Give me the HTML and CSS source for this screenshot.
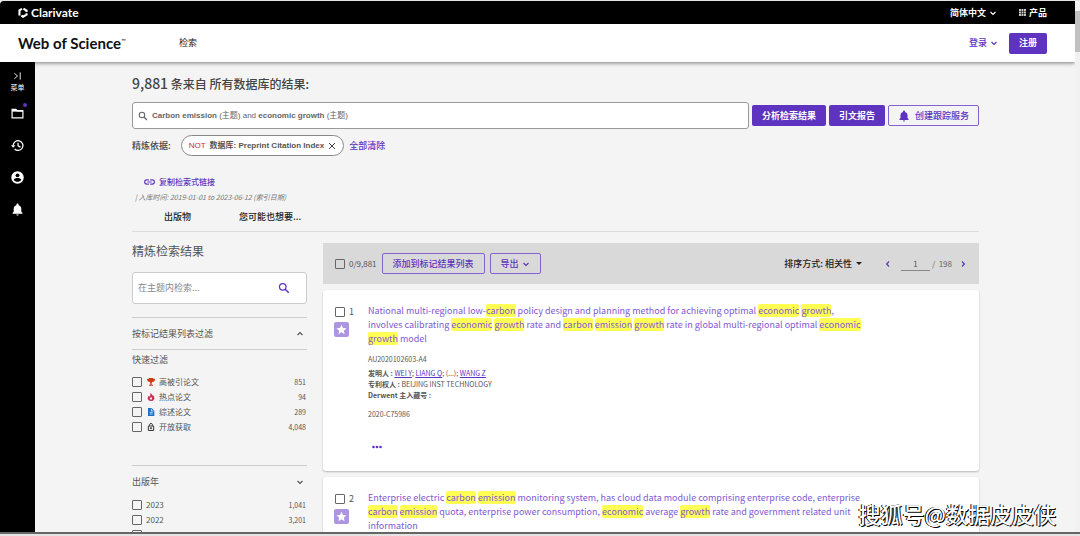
FILE: index.html
```html
<!DOCTYPE html>
<html lang="zh-CN">
<head>
<meta charset="utf-8">
<title>Web of Science</title>
<link rel="stylesheet" href="styles.css">
</head>
<body>
<svg class="defs" aria-hidden="true">
  <symbol id="down" viewBox="0 0 8 8"><path d="M1.500 3l2.500 2.400L6.500 3" fill="none" stroke="currentColor" stroke-width="1.200"/></symbol>
  <symbol id="star" viewBox="0 0 24 24"><path fill="#fff" d="M12 1.500l3.200 7.100 7.700.7-5.800 5.200 1.700 7.600L12 18.100l-6.800 4 1.700-7.600L1.100 9.300l7.700-.7z"/></symbol>
  <symbol id="bell" viewBox="0 0 24 24"><path fill="currentColor" d="M12 23c1.200 0 2.200-.9 2.200-2H9.800c0 1.100 1 2 2.200 2zM19 16v-5.500c0-3.200-1.800-5.800-5-6.500V3c0-1-.8-2-2-2s-2 1-2 2v1c-3.200.7-5 3.300-5 6.500V16l-2 2v2h18v-2z"/></symbol>
  <symbol id="lens" viewBox="0 0 24 24"><circle cx="9.500" cy="9.500" r="6.500" fill="none" stroke="currentColor" stroke-width="2.500"/><path d="M14.500 14.500l7 7" stroke="currentColor" stroke-width="3"/></symbol>
</svg>
<div class="window">
  <div class="page">
    <header>
      <div class="topbar">
        <a class="brand" href="#"><svg class="brand-mark" viewBox="0 0 24 26" fill="none" stroke="#fff" stroke-width="5"><path d="M3.500 20V8l6-4"/><path d="M13 3.500l7.500 5V12"/><path d="M20.500 15v3L12 23l-4-2.500"/></svg>Clarivate</a>
        <nav class="top-links">
          <button type="button">简体中文 <svg class="chev"><use href="#down"/></svg></button>
          <button type="button"><svg class="grid" viewBox="0 0 9 9" fill="#ccc"><path d="M0 0h2.500v2.500H0zM3.200 0h2.500v2.500H3.200zM6.400 0h2.500v2.500H6.400zM0 3.200h2.500v2.500H0zM3.200 3.200h2.500v2.500H3.200zM6.400 3.200h2.500v2.500H6.400zM0 6.400h2.500v2.500H0zM3.200 6.400h2.500v2.500H3.200zM6.400 6.400h2.500v2.500H6.400z"/></svg> 产品</button>
        </nav>
      </div>
      <div class="header">
        <a class="wos" href="#">Web of Science<sup>™</sup></a>
        <a class="nav-search" href="#">检索</a>
        <button type="button" class="signin">登录 <svg class="chev"><use href="#down"/></svg></button>
        <button type="button" class="solid">注册</button>
      </div>
    </header>
    <div class="body">
      <nav class="rail">
        <button type="button" class="menu"><svg viewBox="0 0 10 8" fill="none" stroke="#fff"><path d="M1.500 1L5 4 1.500 7M8 0v8"/></svg>菜单</button>
        <button type="button" class="folder" aria-label="标记结果列表"><svg viewBox="0 0 24 24" fill="none" stroke="#fff" stroke-width="2.200"><path d="M2 20V4.500h7l2.500 2.500H22v13z"/><path d="M2 7h20" stroke-width="3"/></svg><i class="dot"></i></button>
        <button type="button" aria-label="历史"><svg viewBox="0 0 24 24" fill="none" stroke="#fff" stroke-width="2.300"><path d="M4 12a9 9 0 1 1 2.700 6.500M13 7v5.500l4.500 2.500"/><path d="M0 11.500h8L4 16z" fill="#fff" stroke="none"/></svg></button>
        <button type="button" aria-label="个人信息"><svg viewBox="0 0 24 24"><circle cx="12" cy="12" r="11.500" fill="#fff"/><circle cx="12" cy="8" r="3.500"/><path d="M5 16c1.500-4 12.500-4 14 0-3 5-11 5-14 0z"/></svg></button>
        <button type="button" aria-label="跟踪服务"><svg><use href="#bell"/></svg></button>
      </nav>
      <main>
        <h1><span class="total">9,881</span> 条来自 所有数据库的结果:</h1>
        <div class="query-row">
          <button type="button" class="query"><svg class="query-lens"><use href="#lens"/></svg><span><b>Carbon emission</b> (主题) and <b>economic growth</b> (主题)</span></button>
          <button type="button" class="solid">分析检索结果</button>
          <button type="button" class="solid">引文报告</button>
          <button type="button" class="outline alert"><svg><use href="#bell"/></svg>创建跟踪服务</button>
        </div>
        <div class="refined">
          <span>精炼依据:</span>
          <button type="button" class="pill"><span class="not">NOT</span><b>数据库: Preprint Citation Index</b><svg viewBox="0 0 8 8" stroke="#444"><path d="M1 1l6 6M7 1L1 7"/></svg></button>
          <a href="#">全部清除</a>
        </div>
        <a class="copy" href="#"><svg viewBox="0 0 24 12" fill="none" stroke="currentColor" stroke-width="2.500"><path d="M10.500 1.500H6a4.500 4.500 0 0 0 0 9h4.500M13.500 1.500H18a4.500 4.500 0 0 1 0 9h-4.500M7.500 6h9"/></svg>复制检索式链接</a>
        <p class="indexed">| 入库时间: 2019-01-01 to 2023-06-12 (索引日期)</p>
        <nav class="tabs"><a href="#">出版物</a><a href="#">您可能也想要...</a></nav>
        <div class="columns">
          <aside>
            <h2>精炼检索结果</h2>
            <div class="filter-search"><input type="text" aria-label="在主题内检索" placeholder="在主题内检索..."><button type="button" aria-label="检索"><svg><use href="#lens"/></svg></button></div>
            <button type="button" class="section">按标记结果列表过滤<svg class="chev up"><use href="#down"/></svg></button>
            <div class="group quick">
              <h3>快速过滤</h3>
              <label><input type="checkbox"><svg viewBox="0 0 12 12"><path fill="#d2390f" d="M3 0h6v1h3c0 3-1 4.500-3.500 4.800L7 7.500V10h2v1.500H3V10h2V7.500L3.500 5.800C1 5.500 0 4 0 1h3z"/></svg>高被引论文<span>851</span></label>
              <label><input type="checkbox"><svg viewBox="0 0 12 12"><path fill="#cf2f55" d="M5 0c3 1.500 2.500 3 3 4l1-1c4 5 1.500 9-3 9S-.5 8 2.500 4l1 1.500C5 4 5.500 2 5 0z"/><path fill="#f4f4f4" d="M6.500 6c2 2 1 4-.5 4S4 8.500 4.500 7.500z"/></svg>热点论文<span>94</span></label>
              <label><input type="checkbox"><svg viewBox="0 0 12 12"><path fill="#1c6fcb" d="M1.500 0H7l4 4v8H1.500z"/><path stroke="#fff" d="M4 6.500h4.500M4 9h4.500M6.500 1v3.500H10" fill="none"/></svg>综述论文<span>289</span></label>
              <label><input type="checkbox"><svg viewBox="0 0 12 12" fill="none" stroke="#333" stroke-width="1.500"><path d="M2 4.500h8v6.700H2zM3.700 4V2.500C3.700.3 8.300.3 8.300 2.500V4"/><circle cx="6" cy="7.800" r="1"/></svg>开放获取<span>4,048</span></label>
            </div>
            <button type="button" class="section year">出版年<svg class="chev"><use href="#down"/></svg></button>
            <div class="group">
              <label><input type="checkbox">2023<span>1,041</span></label>
              <label><input type="checkbox">2022<span>3,201</span></label>
              <label><input type="checkbox">2021<span>2,205</span></label>
            </div>
          </aside>
          <section class="results">
            <div class="toolbar">
              <label class="all"><input type="checkbox">0/9,881</label>
              <button type="button" class="outline">添加到标记结果列表</button>
              <button type="button" class="outline">导出 <svg class="chev"><use href="#down"/></svg></button>
              <div class="sort"><label for="sort">排序方式:</label><select id="sort"><option>相关性</option></select></div>
              <div class="pager">
                <button type="button" aria-label="上一页"><svg class="chev prev"><use href="#down"/></svg></button>
                <input type="text" value="1" aria-label="页码"><span>/&nbsp; 198</span>
                <button type="button" aria-label="下一页"><svg class="chev next"><use href="#down"/></svg></button>
              </div>
            </div>
            <article>
              <div class="pick"><label><input type="checkbox">1</label><span class="star"><svg><use href="#star"/></svg></span></div>
              <div class="record">
                <a class="title" href="#">National multi-regional low-<mark>carbon</mark> policy design and planning method for achieving optimal <mark>economic</mark> <mark>growth</mark>, involves calibrating <mark>economic</mark> <mark>growth</mark> rate and <mark>carbon</mark> <mark>emission</mark> <mark>growth</mark> rate in global multi-regional optimal <mark>economic</mark> <mark>growth</mark> model</a>
                <p class="number">AU2020102603-A4</p>
                <p><b>发明人 :</b> <a href="#">WEI Y</a>; <a href="#">LIANG Q</a>; (...); <a href="#">WANG Z</a></p>
                <p><b>专利权人 :</b> BEIJING INST TECHNOLOGY</p>
                <p><b>Derwent 主入藏号 :</b></p>
                <p class="accession">2020-C75986</p>
                <button type="button" class="more" aria-label="更多"><svg viewBox="0 0 10 4" fill="currentColor"><circle cx="1.500" cy="2" r="1.300"/><circle cx="5" cy="2" r="1.300"/><circle cx="8.500" cy="2" r="1.300"/></svg></button>
              </div>
            </article>
            <article>
              <div class="pick"><label><input type="checkbox">2</label><span class="star"><svg><use href="#star"/></svg></span></div>
              <div class="record">
                <a class="title" href="#">Enterprise electric <mark>carbon</mark> <mark>emission</mark> monitoring system, has cloud data module comprising enterprise code, enterprise <mark>carbon</mark> <mark>emission</mark> quota, enterprise power consumption, <mark>economic</mark> average <mark>growth</mark> rate and government related unit information</a>
              </div>
            </article>
          </section>
        </div>
      </main>
    </div>
  </div>
  <div class="scrollbar"><i class="thumb"></i></div>
</div>
<div class="watermark">搜狐号@数据皮皮侠</div>
</body>
</html>
```
FILE: styles.css
```css
* { box-sizing: border-box; }
body {
  margin: 0;
  height: 100vh;
  overflow: hidden;
  padding: 1px 0 2px;
  background: #e4e4e4;
  color: #555;
  font: 8px/12px "Noto Sans CJK SC", sans-serif;
}
h1, h2, h3, p { margin: 0; font-weight: 400; }
a { color: #5e33bf; text-decoration: none; }
button { font: inherit; color: inherit; border: 0; padding: 0; background: none; display: flex; align-items: center; justify-content: center; }
svg { display: block; flex: none; }
.defs { position: absolute; width: 0; height: 0; }
.chev { width: 8px; height: 8px; margin-left: 3px; }
.up { transform: rotate(180deg); }
.window { display: flex; height: 100%; border-bottom: 2px solid #666; background: #f4f4f4; }
.page { flex: 1; min-width: 0; display: flex; flex-direction: column; overflow: hidden; }
.scrollbar { width: 5px; background: #f1f1f1; padding-top: 10px; }
.thumb { display: block; height: 41px; background: #c1c1c1; }

header { flex: none; position: relative; box-shadow: 0 1px 4px rgba(0, 0, 0, .5); }
.topbar { display: flex; align-items: center; justify-content: space-between; height: 23px; padding: 0 28px 0 18px; background: #000; border-top-left-radius: 4px; }
.brand { display: flex; align-items: center; gap: 3px; color: #fff; font: 700 12px/14px Lato, sans-serif; }
.brand-mark { width: 10px; height: 11px; }
.top-links { display: flex; gap: 22px; color: #fff; font-size: 9px; font-weight: 700; }
.grid { width: 7px; height: 7px; margin-right: 3px; }
.header { display: flex; align-items: center; height: 38px; padding: 0 28px 0 18px; background: #fff; }
.wos { color: #111; font: 700 15px/18px Lato, sans-serif; width: 161px; }
.wos sup { font-size: 6px; line-height: 0; vertical-align: 6px; font-weight: 400; }
.nav-search { color: #222; font-size: 9px; }
.signin { margin: 0 11px 0 auto; color: #5e33bf; font-size: 9px; font-weight: 500; }
.solid { height: 21px; padding: 0 10px; border-radius: 2px; background: #5e33bf; color: #fff; font-size: 9px; font-weight: 700; white-space: nowrap; }
.outline { height: 21px; padding: 0 9px; border: 1px solid #8460d2; border-radius: 2px; color: #5e33bf; font-size: 9px; font-weight: 500; white-space: nowrap; }

.body { flex: 1; min-height: 0; display: flex; }
.rail { width: 35px; flex: none; background: #000; color: #fff; padding-top: 10px; display: flex; flex-direction: column; align-items: center; gap: 19px; }
.rail button { position: relative; }
.rail svg { width: 13px; height: 13px; }
.rail .menu { flex-direction: column; gap: 1px; font-size: 7px; }
.rail .menu svg { width: 9px; height: 8px; }
.rail .folder { margin-top: -5px; }
.dot { position: absolute; top: -4px; right: -3px; width: 4px; height: 4px; border-radius: 50%; background: #5e33bf; }
main { flex: 1; min-width: 0; padding: 13px 96px 0 97px; }
h1 { color: #444; font-size: 12px; line-height: 16px; font-weight: 500; }
.total { font-size: 14px; }
.query-row { display: flex; align-items: center; gap: 3px; margin-top: 10px; }
.query { flex: 1; justify-content: flex-start; height: 27px; padding: 0 5px; border: 1px solid #999; border-radius: 3px; background: #fff; color: #666; font: 8px/12px "Liberation Sans", "Noto Sans CJK SC", sans-serif; gap: 4px; }
.query-lens { width: 10px; height: 10px; }
.alert { gap: 5px; }
.alert svg { width: 12px; height: 12px; }
.refined { display: flex; align-items: center; margin-top: 6px; gap: 5px; font-size: 9px; color: #444; font-weight: 500; }
.pill { height: 21px; margin-left: 5px; padding: 0 7px; border: 1px solid #888; border-radius: 11px; background: #fff; gap: 4px; font: 8px/12px "Liberation Sans", "Noto Sans CJK SC", sans-serif; color: #555; }
.pill svg { width: 8px; height: 8px; }
.not { color: #cf2450; }
.copy { display: flex; align-items: center; gap: 4px; width: max-content; margin: 20px 0 0 12px; font-weight: 500; line-height: 12px; }
.copy svg { width: 11px; height: 6px; }
.indexed { margin: 3px 0 0 3px; font-size: 7px; line-height: 12px; font-style: italic; color: #777; }
.tabs { display: flex; gap: 48px; padding: 7px 32px; margin-bottom: 11px; font-size: 9px; line-height: 14px; font-weight: 500; border-bottom: 1px solid #ddd; }
.tabs a { color: #222; }

.columns { display: grid; grid-template-columns: 175px minmax(0, 1fr); gap: 16px; }
h2 { font-size: 12px; line-height: 16px; }
.filter-search { display: flex; align-items: center; height: 32px; margin: 13px 0; border: 1px solid #ccc; border-radius: 3px; background: #fff; padding: 0 16px 0 5px; }
.filter-search input { flex: 1; min-width: 0; border: 0; padding: 0; background: none; font: inherit; font-size: 9px; }
.filter-search input::placeholder { color: #888; }
.filter-search button { color: #5e33bf; }
.filter-search svg { width: 12px; height: 12px; }
.section { width: 100%; justify-content: space-between; padding: 0 3px 0 0; height: 33px; border-top: 1px solid #ccc; border-bottom: 1px solid #ccc; font-size: 9px; }
.group { display: flex; flex-direction: column; }
h3 { font-size: 9px; line-height: 14px; margin: 3px 0 7px; }
.group label { display: flex; align-items: center; height: 15px; gap: 4px; padding-right: 1px; }
.group label svg { width: 8px; height: 8px; margin-left: 1px; }
.group label span { margin-left: auto; font-size: 7px; }
.quick { padding-bottom: 31px; }
.year { height: 32px; border-bottom: 0; }
input[type=checkbox] { appearance: none; flex: none; width: 10px; height: 10px; margin: 0; border: 1px solid #666; border-radius: 1px; }

.toolbar { display: flex; align-items: center; min-height: 41px; padding: 0 12px; gap: 5px; background: #d9d9d9; }
.toolbar .outline { padding: 0 10px; }
.all, .pick label { display: flex; align-items: center; gap: 4px; }
.sort { display: flex; align-items: center; margin-left: auto; font-size: 9px; font-weight: 500; color: #222; }
.sort select { appearance: none; border: 0; padding: 0 12px 0 2px; color: inherit; font: inherit; background: none; }
.sort::after { content: ""; margin-left: -9px; border: 3px solid transparent; border-top-color: #222; border-bottom: 0; }
.pager { display: flex; align-items: center; margin-left: 17px; color: #5e33bf; }
.pager .chev { margin: 0; }
.prev { transform: rotate(90deg); }
.next { transform: rotate(-90deg); }
.pager input { width: 29px; height: 15px; margin: 0 2px 0 9px; padding: 0; border: 0; border-bottom: 1px solid #888; background: none; text-align: center; font: inherit; color: #555; }
.pager span { margin-right: 7px; color: #666; }
article { display: flex; gap: 13px; min-height: 181px; margin-top: 6px; padding: 14px 96px 0 11px; border-radius: 3px; background: #fff; box-shadow: 0 1px 2px rgba(0, 0, 0, .25); }
.pick { width: 21px; flex: none; padding-top: 2px; font-size: 9px; }
.pick label { padding-left: 1px; }
.star { display: grid; place-items: center; width: 15px; height: 15px; margin-top: 4px; border-radius: 2px; background: #ad96df; }
.star svg { width: 11px; height: 11px; }
.record { flex: 1; min-width: 0; font-size: 7px; line-height: 11px; }
.title { display: block; max-width: 495px; margin-bottom: 8px; font-size: 9px; line-height: 14px; color: #8159d3; }
mark { color: inherit; background: #ffff54; border-radius: 2px; }
.record p a { text-decoration: underline; }
.number { margin-bottom: 3px; }
.accession { margin-top: 8px; }
.more { margin: 25px 0 0 4px; color: #5e33bf; }
.more svg { width: 10px; height: 4px; }
.watermark { position: absolute; right: 24px; bottom: 8px; color: #fff; font-size: 22px; line-height: 30px; font-weight: 500; text-shadow: 1px 1px 0 #000, -1px 0 0 #000; }
```
